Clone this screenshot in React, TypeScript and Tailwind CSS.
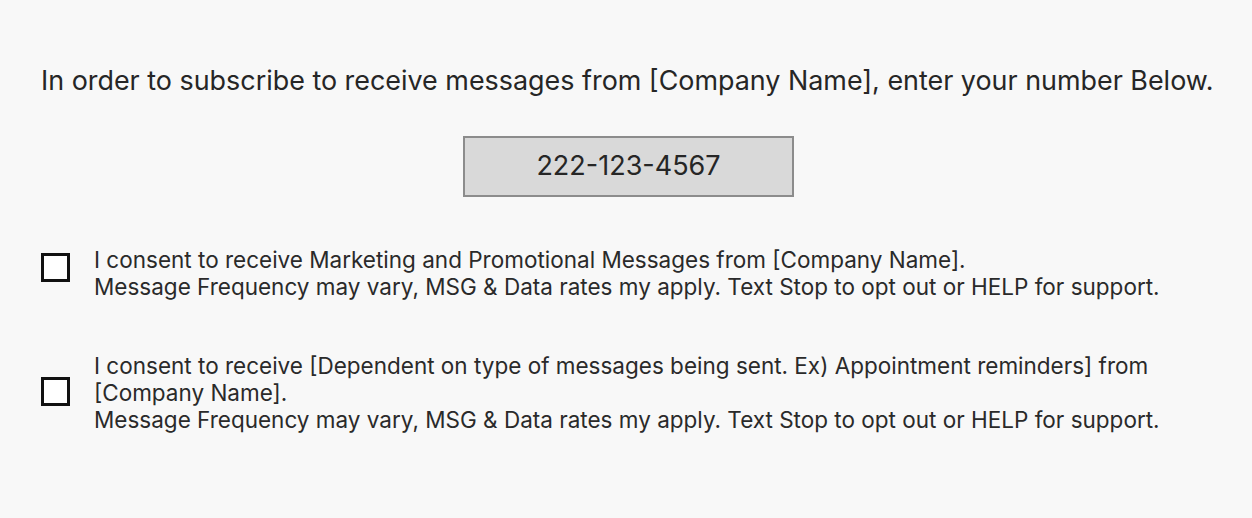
import React from "react";

const consents = [
  {
    id: 1,
    box: "mt-[7px]",
    lines: [
      "I consent to receive Marketing and Promotional Messages from [Company Name].",
      "Message Frequency may vary, MSG & Data rates my apply. Text Stop to opt out or HELP for support.",
    ],
  },
  {
    id: 2,
    box: "mt-[25px]",
    lines: [
      "I consent to receive [Dependent on type of messages being sent. Ex) Appointment reminders] from",
      "[Company Name].",
      "Message Frequency may vary, MSG & Data rates my apply. Text Stop to opt out or HELP for support.",
    ],
  },
];

export default function App() {
  return (
    <div className="min-h-[518px] w-full bg-[#f8f8f8] font-['Inter',sans-serif] text-[#262626]">
      <div className="pt-[63px] pl-[41px]">
        <p className="text-[26.9px] leading-[34px] whitespace-nowrap">
          In order to subscribe to receive messages from [Company Name], enter your number Below.
        </p>

        {/* Phone number field */}
        <div className="mt-[39px] pl-[422px]">
          <div className="w-[331px] h-[61px] bg-[#d9d9d9] border-2 border-[#8c8c8c] flex items-center justify-center text-[27px]">
            222-123-4567
          </div>
        </div>

        {/* Consent rows */}
        <div className="mt-[49px] flex flex-col gap-[52px]">
          {consents.map((c) => (
            <div key={c.id} className="flex items-start gap-[24px]">
              <div className={`${c.box} w-[29px] h-[29px] shrink-0 bg-white border-[3px] border-[#111]`} />
              <div className="text-[22.5px] leading-[27px] text-[#2a2a2a] whitespace-nowrap">
                {c.lines.map((l, i) => (
                  <div key={i}>{l}</div>
                ))}
              </div>
            </div>
          ))}
        </div>
      </div>
    </div>
  );
}
